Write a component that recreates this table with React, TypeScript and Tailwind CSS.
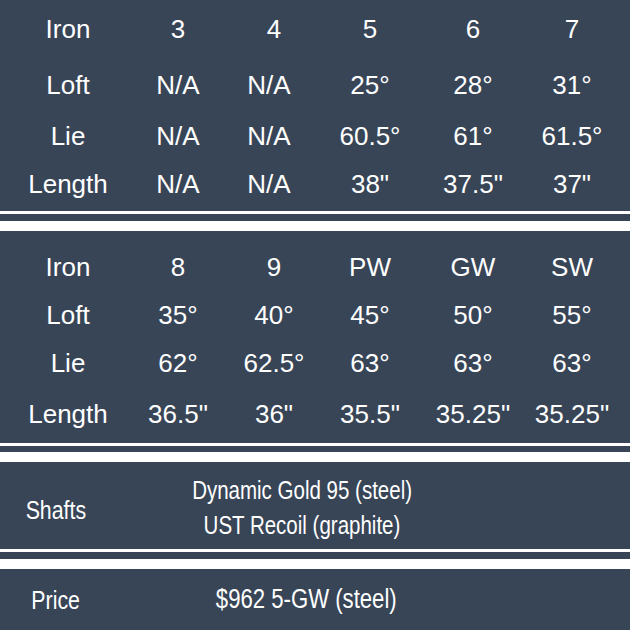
import React from 'react';

type Row = { label: string; cells: string[]; h: string };

const TOP: Row[] = [
  { label: 'Iron', cells: ['3', '4', '5', '6', '7'], h: 'h-[57px]' },
  { label: 'Loft', cells: ['N/A', 'N/A', '25°', '28°', '31°'], h: 'h-[55px]' },
  { label: 'Lie', cells: ['N/A', 'N/A', '60.5°', '61°', '61.5°'], h: 'h-[48px]' },
  { label: 'Length', cells: ['N/A', 'N/A', '38"', '37.5"', '37"'], h: 'h-[48px]' },
];

const BOTTOM: Row[] = [
  { label: 'Iron', cells: ['8', '9', 'PW', 'GW', 'SW'], h: 'h-[48px]' },
  { label: 'Loft', cells: ['35°', '40°', '45°', '50°', '55°'], h: 'h-[47px]' },
  { label: 'Lie', cells: ['62°', '62.5°', '63°', '63°', '63°'], h: 'h-[49px]' },
  { label: 'Length', cells: ['36.5"', '36"', '35.5"', '35.25"', '35.25"'], h: 'h-[53px]' },
];

const SpecTable = ({ rows }: { rows: Row[] }) => (
  <div className="flex flex-col pl-[13px]">
    {rows.map((r) => (
      <div key={r.label + r.cells[0]} className={`grid grid-cols-[110px_110px_82px_110px_96px_102px] items-center ${r.h}`}>
        <span className="text-center">{r.label}</span>
        {r.cells.map((c, i) => (
          <span key={i} className={`text-center whitespace-nowrap ${i === 1 && c === 'N/A' ? 'pr-[10px]' : ''}`}>
            {c}
          </span>
        ))}
      </div>
    ))}
  </div>
);

// double rule between sections
const Divider = ({ gap }: { gap: string }) => (
  <div className="flex flex-col">
    <div className="h-[3px] bg-white" />
    <div className={gap} />
    <div className="h-[10px] bg-white" />
  </div>
);

// condensed text (no narrow face installed)
const Narrow = ({ children }: { children: React.ReactNode }) => (
  <span className="inline-block whitespace-nowrap scale-x-[0.82] origin-center">{children}</span>
);

export default function App() {
  return (
    <div className="w-[630px] h-[630px] overflow-hidden bg-[#384557] text-white font-['Liberation_Sans',Arial,sans-serif] text-[26px] leading-none">
      <SpecTable rows={TOP} />
      <div className="pt-[3px]">
        <Divider gap="h-[7px]" />
      </div>

      <div className="pt-[12px] pb-[3px]">
        <SpecTable rows={BOTTOM} />
      </div>
      <Divider gap="h-[6px]" />

      <div className="h-[87px] grid grid-cols-[112px_380px]">
        <div className="pt-[31px] leading-[35px] text-center text-[26px]">
          <Narrow>Shafts</Narrow>
        </div>
        <div className="pt-[11px] leading-[35px] text-center text-[25px]">
          <div><Narrow>Dynamic Gold 95 (steel)</Narrow></div>
          <div><Narrow>UST Recoil (graphite)</Narrow></div>
        </div>
      </div>
      <Divider gap="h-[7px]" />

      <div className="h-[61px] grid grid-cols-[112px_380px] items-center">
        <div className="text-center text-[26px]"><Narrow>Price</Narrow></div>
        <div className="text-center text-[27px] pl-[8px]"><Narrow>$962 5-GW (steel)</Narrow></div>
      </div>
    </div>
  );
}
